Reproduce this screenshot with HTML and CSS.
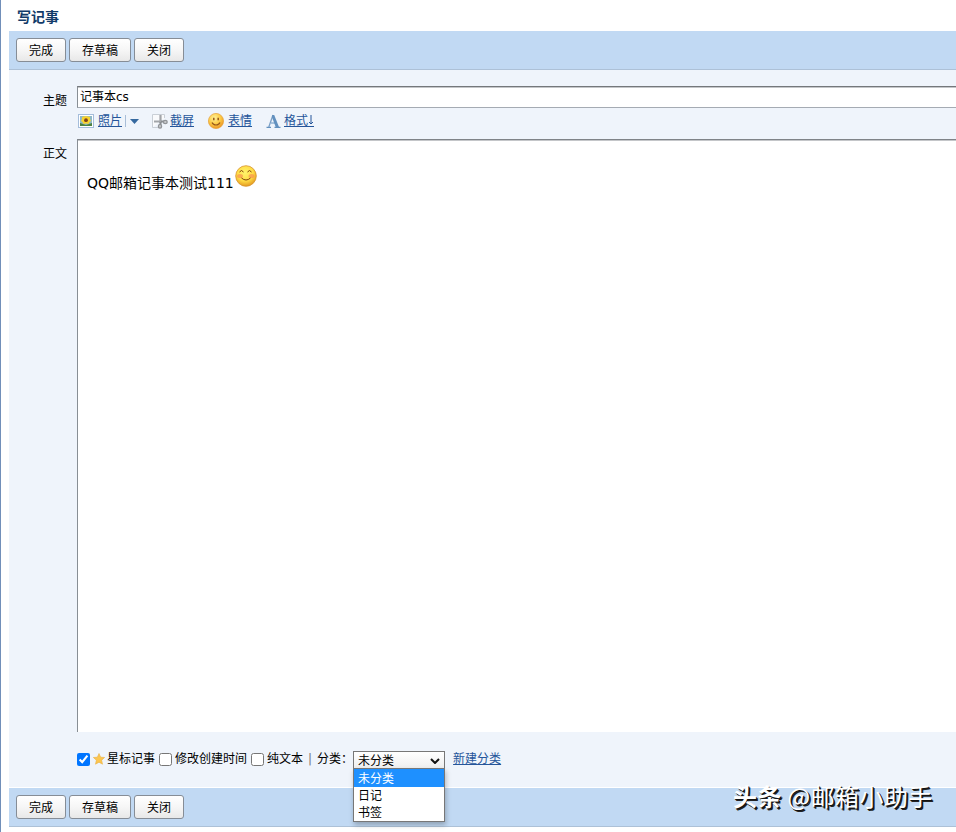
FILE: index.html
```
<!DOCTYPE html>
<html lang="zh-CN">
<head>
  <meta charset="UTF-8" />
  <meta name="viewport" content="width=device-width, initial-scale=1.0"/>
  <title>写记事</title>
  <link rel="stylesheet" href="styles.css">
</head>
<body>
  <div class="page">
    <h1>写记事</h1>

    <div class="toolbar">
      <button type="button" class="btn">完成</button>
      <button type="button" class="btn btn-wide">存草稿</button>
      <button type="button" class="btn">关闭</button>
    </div>

    <div class="compose">
      <div class="row row-subject">
        <label class="label" for="subject">主题</label>
        <input id="subject" class="subject" type="text" value="记事本cs">
      </div>

      <!-- 编辑工具 -->
      <div class="tools">
        <a class="tool tool-photo">
          <svg width="16" height="14" viewBox="0 0 16 14">
            <rect x=".5" y=".5" width="15" height="13" fill="#fff" stroke="#a5bddb"/>
            <rect x="2" y="2" width="12" height="10" fill="#8eb9c7"/>
            <path d="M2 9l3 1 3 1 3-1 3-1v3H2z" fill="#4c8240"/>
            <path d="M8 2l2 .5 2 .5 0 2 1 2-1.500 1-1 2L8 9.600l-2.500.4-1-2L3 7l1-2 0-2 2-.5z" fill="#f8d32f"/>
            <circle cx="8" cy="6.200" r="1.900" fill="#7b421d"/>
          </svg>
          <span class="link">照片</span>
          <i class="split"></i>
          <svg class="arrow" width="9" height="5" viewBox="0 0 9 5"><path d="M0 0h9L4.500 5z" fill="#36699f"/></svg>
        </a>
        <a class="tool tool-capture">
          <svg width="16" height="15" viewBox="0 0 16 15">
            <path d="M.5 13.500V.5H12.500V4M.5 13.500H7" fill="#f9fafc" stroke="#c9cfd6"/>
            <path d="M8.500 1v8M2 7.500h7" stroke="#a2a5a9" stroke-width="2.200"/>
            <path d="M8.500 8v3M9 7.500h3" stroke="#8a8d91" stroke-width="2"/>
            <ellipse cx="8" cy="12.300" rx="1.600" ry="1.900" fill="#c8cacc" stroke="#909397" stroke-width="1.300"/>
            <ellipse cx="13.300" cy="8" rx="1.900" ry="1.600" fill="#c8cacc" stroke="#909397" stroke-width="1.300"/>
          </svg>
          <span class="link">截屏</span>
        </a>
        <a class="tool tool-face">
          <svg width="16" height="16" viewBox="0 0 16 16">
            <defs><radialGradient id="face" cx=".4" cy=".3" r=".7"><stop offset="0" stop-color="#fff19a"/><stop offset=".55" stop-color="#fdcc46"/><stop offset="1" stop-color="#ed9827"/></radialGradient></defs>
            <circle cx="8" cy="8" r="7.600" fill="url(#face)" stroke="#e5a138" stroke-width=".7"/>
            <path d="M5.800 4.800v2.500M10.200 4.800v2.500" stroke="#97581a" stroke-width="1.500"/>
            <path d="M4 9.500c1.500 3.300 6.500 3.300 8 0" fill="none" stroke="#97581a" stroke-width="1.200"/>
          </svg>
          <span class="link">表情</span>
        </a>
        <a class="tool tool-format">
          <svg width="15" height="14" viewBox="0 0 15 14">
            <path d="M7 1L2.800 13" fill="none" stroke="#7ba0c6" stroke-width="1.300"/>
            <path d="M6.200 1h2L13 13h-3.300L5.900 3z" fill="#6391bf"/>
            <path d="M.5 13.300H5M8.500 13.300h6M5 9h5" stroke="#6391bf" stroke-width="1.200"/>
          </svg>
          <span class="link link-down">格式<svg width="6" height="10" viewBox="0 0 6 10"><path d="M3 0v9M1 7l2 2 2-2" fill="none" stroke="#25559a"/></svg></span>
        </a>
      </div>

      <div class="row row-content">
        <div class="label">正文</div>
        <div class="editor">
          <span>QQ邮箱记事本测试111</span>
          <svg class="smile" width="22" height="22" viewBox="0 0 22 22">
            <defs><radialGradient id="smile" cx=".45" cy=".35" r=".65"><stop offset="0" stop-color="#fff36b"/><stop offset=".6" stop-color="#ffdc45"/><stop offset="1" stop-color="#e49b22"/></radialGradient></defs>
            <circle cx="11" cy="11" r="10.300" fill="url(#smile)" stroke="#d8942c" stroke-width=".8"/>
            <ellipse cx="5" cy="11" rx="3" ry="2" fill="#fa9351" opacity=".7"/>
            <ellipse cx="16.500" cy="11" rx="3" ry="2" fill="#fa9351" opacity=".7"/>
            <path d="M4.500 7q2-3 4 0M12.500 7q2-3 4 0M6.500 13q4.500 4 9 0" fill="none" stroke="#80400d"/>
          </svg>
        </div>
      </div>

      <div class="options">
        <label class="check"><input type="checkbox" checked>
          <svg class="star" width="12" height="12" viewBox="0 0 12 12"><path d="M6 .5l1.600 3.700 4 .3-3 2.700.9 4L6 9.200l-3.500 2 .9-4-3-2.700 4-.3z" fill="#fcc650" stroke="#e9ae3d" stroke-width=".6"/></svg>星标记事</label>
        <label class="check"><input type="checkbox">修改创建时间</label>
        <label class="check"><input type="checkbox">纯文本</label>
        <span class="bar">|</span>
        <span class="type">分类：</span>
        <div class="select">
          <div class="select-value">未分类
            <svg width="10" height="6" viewBox="0 0 10 6"><path d="M1 1l4 4 4-4" fill="none" stroke="#111" stroke-width="2"/></svg>
          </div>
          <ul class="menu">
            <li class="active">未分类</li>
            <li>日记</li>
            <li>书签</li>
          </ul>
        </div>
        <a class="link">新建分类</a>
      </div>
    </div>

    <div class="toolbar toolbar-bottom">
      <button type="button" class="btn">完成</button>
      <button type="button" class="btn btn-wide">存草稿</button>
      <button type="button" class="btn">关闭</button>
    </div>
  </div>

  <div class="watermark"><b>头条</b> @邮箱小助手</div>
</body>
</html>
```
FILE: styles.css
```
* {
  box-sizing: border-box;
}

body {
  margin: 0;
  height: 832px;
  overflow: hidden;
  position: relative;
  background: #fff;
  color: #000;
  font: 12px/18px "DejaVu Sans", "Noto Sans CJK SC", sans-serif;
}

.page {
  height: 832px;
  border-left: 1px solid #718fb9;
  padding-left: 8px;
}

h1 {
  height: 31px;
  margin: 0;
  padding: 7px 0 0 8px;
  color: #123b69;
  font-size: 14px;
  line-height: 20px;
}

.toolbar {
  display: flex;
  gap: 3px;
  height: 39px;
  padding: 7px 7px 0;
  background: #c1d9f3;
  border-bottom: 1px solid #adc1d7;
}

.btn {
  width: 50px;
  height: 24px;
  padding: 2px 0 0;
  border: 1px solid #868d96;
  border-radius: 3px;
  background: linear-gradient(#fff, #f6f6f6 50%, #e8e8e8);
  color: #000;
  font: inherit;
}

.btn-wide {
  width: 62px;
}

.compose {
  height: 717px;
  padding-top: 16px;
  background: #eff4fb;
}

.row {
  display: flex;
}

.row-subject {
  height: 22px;
}

.label {
  width: 68px;
  padding-left: 34px;
  flex: none;
}

.row-subject .label {
  padding-top: 6px;
}

.subject {
  flex: 1;
  height: 22px;
  padding: 0 2px 3px;
  border: 1px solid #a5abb3;
  border-top-color: #74777b;
  border-left-color: #888e94;
  border-right: 0;
  outline: 0;
  box-shadow: inset 0 1px #c4c6c9;
  background: #fff;
  color: #000;
  font: inherit;
}

.tools {
  display: flex;
  height: 31px;
  padding: 4px 0 0 69px;
}

.tool {
  display: flex;
  align-items: center;
  height: 18px;
}

.tool .link {
  margin-left: 4px;
}

.tool-photo {
  width: 74px;
}

.tool-capture {
  width: 56px;
}

.tool-capture .link {
  margin-left: 2px;
}

.tool-face {
  width: 58px;
}

.tool-format .link {
  margin-left: 3px;
}

.link {
  color: #25559a;
  text-decoration: underline;
  white-space: nowrap;
}

.link-down svg {
  height: 12px;
  padding-bottom: 1px;
  border-bottom: 1px solid #25559a;
  vertical-align: -2px;
}

.split {
  width: 1px;
  height: 12px;
  margin: 0 4px 0 3px;
  background: #a9bed8;
}

.row-content {
  height: 593px;
}

.row-content .label {
  padding-top: 6px;
}

.editor {
  display: flex;
  align-items: flex-start;
  flex: 1;
  padding: 26px 9px;
  border-top: 1px solid #7f8388;
  border-left: 1px solid #888e94;
  box-shadow: inset 0 1px #c4c6c9;
  background: #fff;
  font-size: 14px;
  line-height: 34px;
}

.smile {
  margin: -1px 0 0 1px;
}

.options {
  display: flex;
  height: 55px;
  padding: 18px 0 0 68px;
}

.check {
  display: flex;
  align-items: center;
  height: 18px;
  margin-right: 4px;
}

.check input {
  width: 13px;
  height: 13px;
  margin: 1px 3px 0 0;
}

.star {
  margin-right: 2px;
}

.bar {
  margin: 0 5px 0 1px;
  color: #777;
}

.type {
  width: 36px;
  white-space: nowrap;
}

.select {
  position: relative;
  width: 92px;
  height: 19px;
  margin: 1px 8px 0 0;
  line-height: 17px;
}

.select-value {
  display: flex;
  align-items: center;
  justify-content: space-between;
  height: 19px;
  padding: 1px 4px 0;
  border: 1px solid #777;
  background: linear-gradient(#fff, #eee);
}

.menu {
  position: absolute;
  top: 17px;
  left: 0;
  z-index: 1;
  width: 92px;
  height: 54px;
  margin: 0;
  padding: 0;
  border: 1px solid #777;
  background: #fff;
  box-shadow: 1px 3px 5px rgba(0, 0, 0, 0.25);
  list-style: none;
}

.menu li {
  padding-left: 4px;
  height: 17px;
  line-height: 18px;
}

.menu .active {
  height: 18px;
  background: #1e90ff;
  color: #fff;
  line-height: 20px;
}

.toolbar-bottom {
  height: 40px;
  border-top: 1px solid #fff;
}

.watermark {
  position: absolute;
  top: 779px;
  left: 733px;
  color: #fff;
  font: 24px/34px "Noto Sans CJK SC", sans-serif;
  letter-spacing: 0.4px;
  text-shadow: 1px 1px #111, 2px 2px #222;
  white-space: nowrap;
}

.watermark b {
  font-weight: 700;
}
```
